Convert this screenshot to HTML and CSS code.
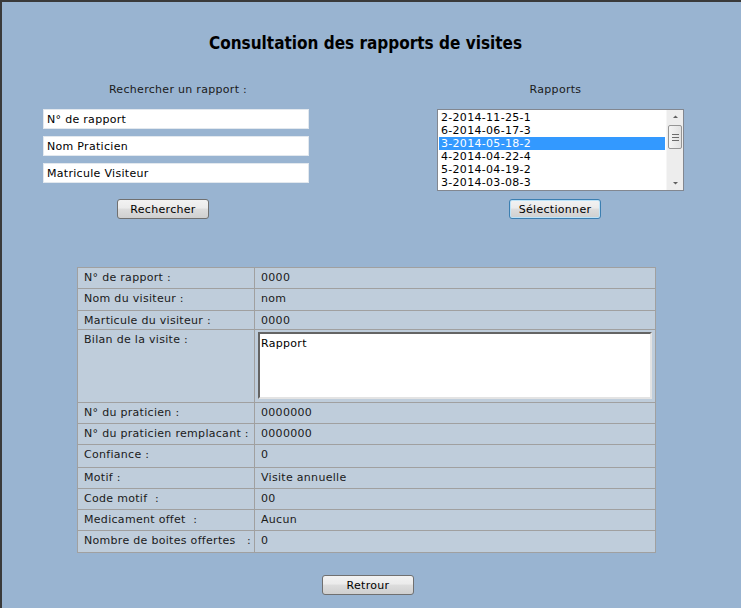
FILE: index.html
```html
<!DOCTYPE html>
<html lang="fr">
<head>
<meta charset="utf-8">
<title>Consultation des rapports de visites</title>
<link rel="stylesheet" href="styles.css">
</head>
<body>
<div class="window">
  <h1 class="title">Consultation des rapports de visites</h1>
  <div class="top">
    <section class="search">
      <div class="caption">Rechercher un rapport :</div>
      <div class="field">N° de rapport</div>
      <div class="field">Nom Praticien</div>
      <div class="field">Matricule Visiteur</div>
      <div class="btn-row search-btn"><button class="btn">Rechercher</button></div>
    </section>
    <section class="reports">
      <div class="caption">Rapports</div>
      <div class="listbox">
        <ul class="items">
          <li>2-2014-11-25-1</li>
          <li>6-2014-06-17-3</li>
          <li class="selected">3-2014-05-18-2</li>
          <li>4-2014-04-22-4</li>
          <li>5-2014-04-19-2</li>
          <li>3-2014-03-08-3</li>
        </ul>
        <div class="scrollbar">
          <svg class="arrow" width="17" height="13" viewBox="0 0 17 13"><path d="M6 8h5L8.5 5.5z" fill="#606060"/></svg>
          <div class="thumb">
            <span></span><span></span><span></span>
          </div>
          <div class="track"></div>
          <svg class="arrow" width="17" height="13" viewBox="0 0 17 13"><path d="M6 5h5L8.5 7.5z" fill="#606060"/></svg>
        </div>
      </div>
      <div class="btn-row select-btn"><button class="btn focused">Sélectionner</button></div>
    </section>
  </div>

  <div class="details">
    <div class="cell label r1">N° de rapport :</div><div class="cell value r1">0000</div>
    <div class="cell label">Nom du visiteur :</div><div class="cell value">nom</div>
    <div class="cell label">Marticule du visiteur :</div><div class="cell value">0000</div>
    <div class="cell label">Bilan de la visite :</div><div class="cell value bilan"><div class="textarea">Rapport</div></div>
    <div class="cell label">N° du praticien :</div><div class="cell value">0000000</div>
    <div class="cell label">N° du praticien remplacant :</div><div class="cell value">0000000</div>
    <div class="cell label">Confiance :</div><div class="cell value">0</div>
    <div class="cell label">Motif :</div><div class="cell value">Visite annuelle</div>
    <div class="cell label">Code motif&nbsp; :</div><div class="cell value">00</div>
    <div class="cell label">Medicament offet&nbsp; :</div><div class="cell value">Aucun</div>
    <div class="cell label">Nombre de boites offertes &nbsp; :</div><div class="cell value">0</div>
  </div>

  <div class="footer"><button class="btn">Retrour</button></div>
</div>
</body>
</html>
```
FILE: styles.css
```css
* { box-sizing: border-box; }
html, body { margin: 0; padding: 0; }
body {
  width: 741px;
  height: 608px;
  overflow: hidden;
  font-family: "DejaVu Sans", Verdana, sans-serif;
  font-size: 11px;
  letter-spacing: 0.3px;
  color: #1a1a1a;
}
.window {
  width: 741px;
  height: 608px;
  background: #99b4d1;
  border-top: 2px solid #3a3a3a;
  border-left: 2px solid #3a3a3a;
}
.title {
  margin: 0;
  padding-top: 31px;
  padding-right: 12px;
  height: 70px;
  text-align: center;
  font-family: "DejaVu Sans Condensed", "DejaVu Sans", sans-serif;
  font-size: 17px;
  font-weight: bold;
  letter-spacing: 0;
  color: #000;
}
.top {
  display: flex;
  height: 195px;
}
.search {
  margin-left: 41px;
  width: 266px;
}
.caption {
  text-align: center;
  height: 23px;
  padding-top: 11px;
  line-height: 13px;
}
.search .caption { padding-left: 4px; }
.field {
  height: 20px;
  margin-top: 14px;
  margin-bottom: -7px;
  background: #fff;
  border: 1px solid #e2e8ee;
  padding: 3px 0 0 3px;
  line-height: 13px;
  color: #000;
}
.btn-row { display: flex; }
.search-btn { margin-top: 23px; padding-left: 74px; }
.btn {
  width: 92px;
  height: 20px;
  font-family: "DejaVu Sans", sans-serif;
  font-size: 11px;
  letter-spacing: 0.3px;
  color: #000;
  padding: 0;
  border: 1px solid #707070;
  border-radius: 3px;
  background: linear-gradient(#f2f2f2 0%, #ebebeb 45%, #dddddd 50%, #cfcfcf 100%);
}
.btn.focused {
  border-color: #3c7fb1;
  box-shadow: inset 0 0 0 1px #bde3f8;
}
.reports {
  margin-left: 128px;
  width: 247px;
}
.reports .caption { padding-right: 10px; }
.listbox {
  margin-top: 14px;
  height: 82px;
  border: 1px solid #828790;
  background: #fff;
  display: flex;
}
.items {
  list-style: none;
  margin: 0;
  padding: 1px 1px 0 1px;
  flex: 1;
}
.items li {
  height: 13px;
  line-height: 13px;
  padding-left: 2px;
  color: #000;
}
.items li.selected { background: #3399ff; color: #fff; }
.scrollbar {
  width: 17px;
  background: #ededed;
  border-left: 1px solid #f6f6f6;
  display: flex;
  flex-direction: column;
}
.arrow { display: block; flex: none; }
.thumb {
  margin: 2px 1px 0 1px;
  height: 24px;
  border: 1px solid #959595;
  border-radius: 2px;
  background: linear-gradient(90deg, #f4f4f4, #e2e2e2);
  display: flex;
  flex-direction: column;
  justify-content: center;
  align-items: center;
  gap: 2px;
}
.thumb span {
  display: block;
  width: 7px;
  height: 1px;
  background: #6b6b6b;
}
.track { flex: 1; }
.select-btn { margin-top: 8px; padding-left: 72px; }

.details {
  margin-left: 75px;
  width: 579px;
  display: grid;
  grid-template-columns: 177px 1fr;
  grid-template-rows: 21px 22px 19px 73px 21px 21px 23px 21px 21px 21px 22px;
  background: #bfcddb;
  border: 1px solid #a0a0a0;
  border-bottom: 0;
}
.cell {
  border-bottom: 1px solid #a0a0a0;
  padding: 3px 0 0 6px;
  line-height: 13px;
  color: #1a1a1a;
}
.label { border-right: 1px solid #a0a0a0; }
.value { padding-left: 6px; }
.bilan { padding: 2px 3px 3px 3px; }
.textarea {
  height: 100%;
  background: #fff;
  border-top: 2px solid #646464;
  border-left: 2px solid #646464;
  border-right: 2px solid #e3e3e3;
  border-bottom: 2px solid #e3e3e3;
  padding: 3px 0 0 1px;
  color: #000;
}
.footer {
  display: flex;
  padding-top: 22px;
  padding-left: 320px;
}
```
